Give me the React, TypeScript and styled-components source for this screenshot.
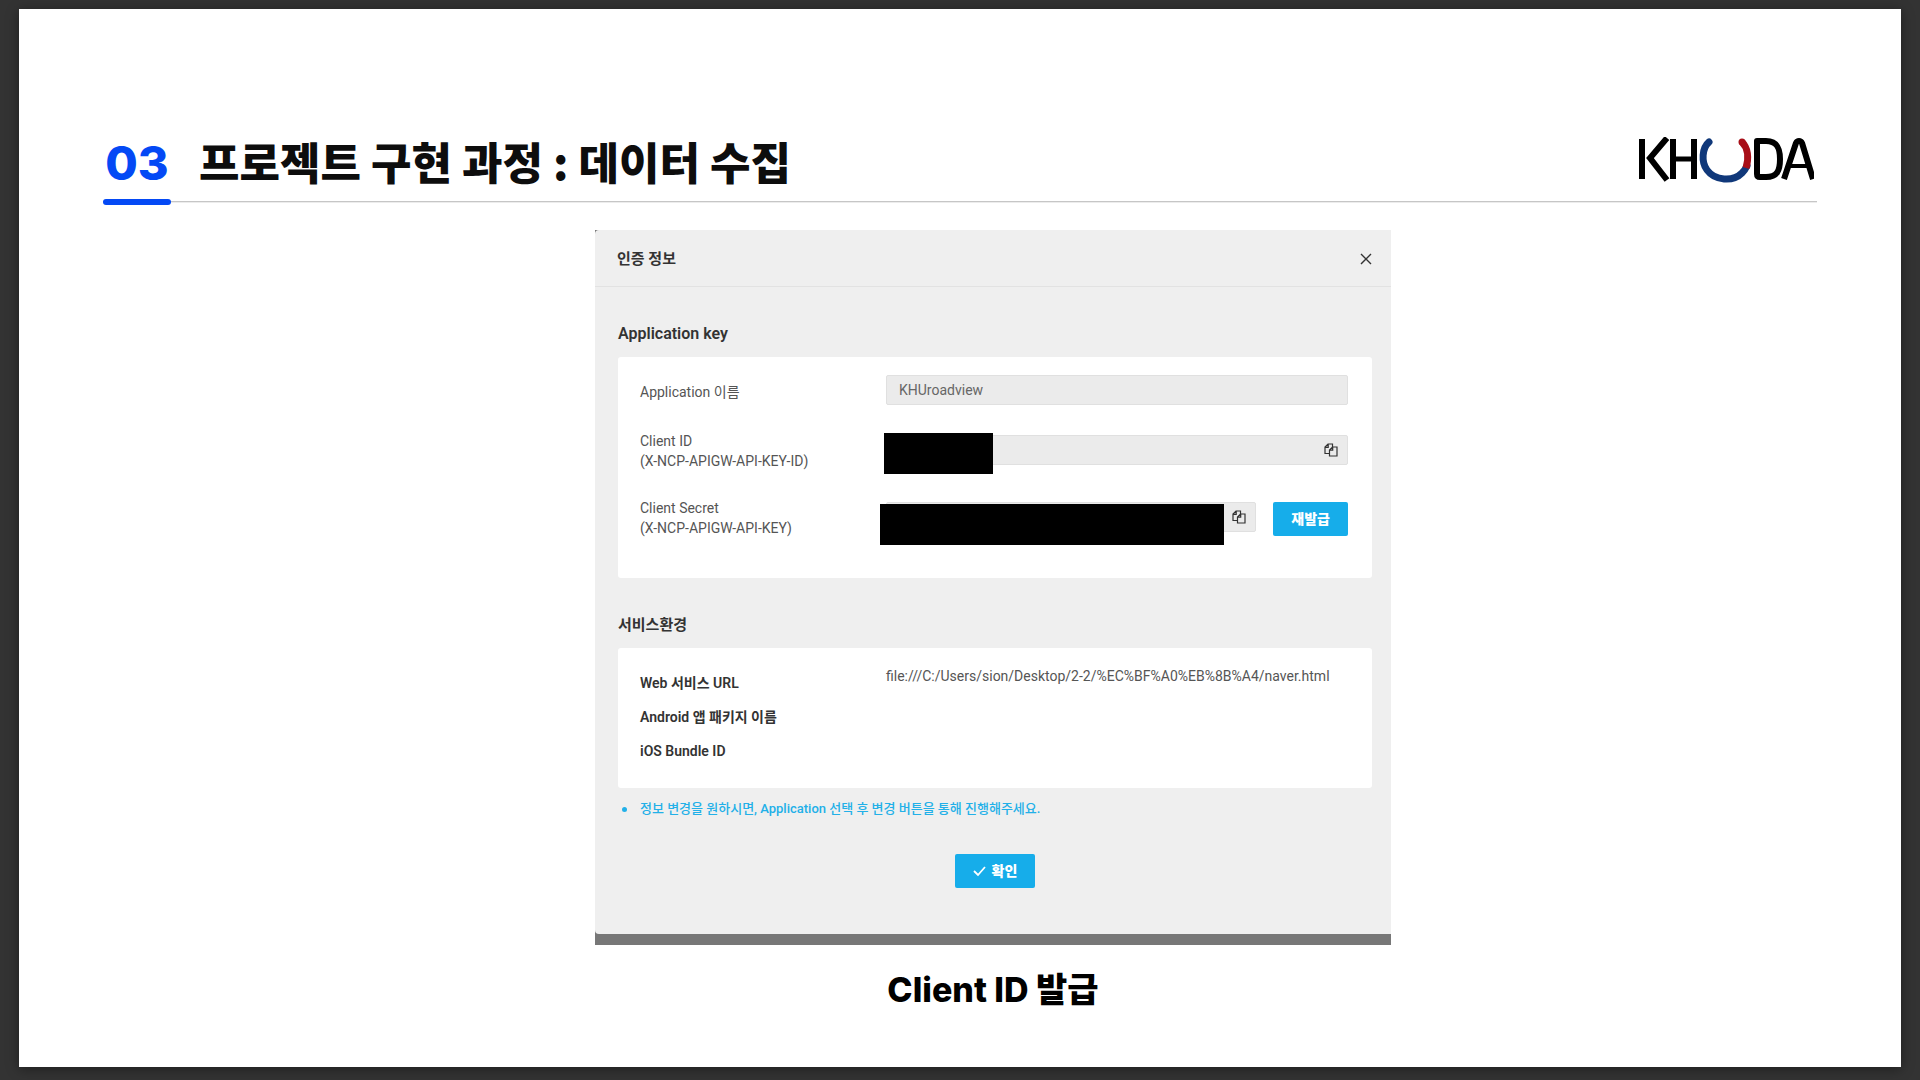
import React from "react";
import styled, { createGlobalStyle } from "styled-components";

const GlobalStyle = createGlobalStyle`
  *, *::before, *::after { box-sizing: border-box; }
  body { margin: 0; background: #333333; }
  h1, h2, h3, p, ul, dl, dd, figure { margin: 0; padding: 0; }
`;

const displayFont = `Inter, "Noto Sans CJK KR", sans-serif`;
const uiFont = `Roboto, "Noto Sans CJK KR", sans-serif`;

const Viewer = styled.div`
  display: flex;
  min-height: 100vh;
  padding: 9px 19px 13px;
`;

const Slide = styled.main`
  flex: 1;
  display: flex;
  flex-direction: column;
  padding: 114px 84px 48px;
  background: #ffffff;
  box-shadow: 0 2px 12px rgba(0, 0, 0, 0.4);
  font-family: ${displayFont};
`;

const SlideHeader = styled.header`
  display: flex;
  align-items: flex-start;
  height: 79px;
  border-bottom: 1px solid #c6c6c6;
  box-shadow: 0 1px 0 #ececec;
`;

const SectionNumber = styled.span`
  position: relative;
  align-self: stretch;
  width: 68px;
  padding-top: 10px;
  color: #0449f5;
  font-size: 47px;
  font-weight: 800;
  line-height: 60px;
  text-align: center;

  &::after {
    content: "";
    position: absolute;
    left: 0;
    right: 0;
    bottom: -4px;
    height: 6px;
    border-radius: 3px;
    background: #0449f5;
  }
`;

const SlideTitle = styled.h1`
  flex: 1;
  padding: 8px 28px 0;
  color: #0d0d0d;
  font-family: "Noto Sans CJK KR", sans-serif;
  font-size: 44px;
  font-weight: 900;
  line-height: 60px;
`;

const Figure = styled.figure`
  display: flex;
  flex-direction: column;
  align-items: center;
  padding: 28px 0 0 66px;
`;

const Capture = styled.div`
  width: 796px;
  max-width: 100%;
  padding-bottom: 11px;
  background: #777777;
`;

const Dialog = styled.section`
  border-radius: 4px 0 0 4px;
  background: #efefef;
  color: #333333;
  font-family: ${uiFont};
  font-size: 14px;
  line-height: 20px;
`;

const DialogHeader = styled.header`
  display: flex;
  align-items: center;
  justify-content: space-between;
  height: 57px;
  padding: 2px 19px 0 22px;
  border-bottom: 1px solid #e2e2e2;
`;

const DialogTitle = styled.h2`
  font-size: 15px;
  font-weight: 700;
  line-height: 24px;
`;

const CloseButton = styled.button`
  display: flex;
  padding: 0;
  border: 0;
  background: none;
  color: #333333;
`;

const DialogBody = styled.div`
  padding: 35px 19px 46px 23px;
`;

const GroupTitle = styled.h3`
  padding-bottom: 11px;
  font-size: 16px;
  font-weight: 600;
  line-height: 24px;
`;

const ServiceTitle = styled(GroupTitle)`
  padding-top: 35px;
  font-size: 15px;
`;

const Card = styled.div`
  padding: 18px 24px 0 22px;
  border-radius: 3px;
  background: #ffffff;
`;

const KeyCard = styled(Card)`
  display: grid;
  grid-template-columns: 246px 1fr;
  grid-template-rows: 60px 67px 76px;
  color: #555555;
`;

const FieldLabel = styled.label<{ $single?: boolean }>`
  padding-top: ${(p) => (p.$single ? "7px" : "0")};
  margin-top: ${(p) => (p.$single ? "0" : "-4px")};
`;

const Field = styled.div`
  display: flex;
  align-items: flex-start;
  gap: 17px;
`;

const InputBox = styled.div`
  position: relative;
  display: flex;
  flex: 1;
  align-items: center;
  height: 30px;
  border: 1px solid #e0e0e0;
  border-radius: 2px;
  background: #ebebeb;
`;

const TextInput = styled.input`
  flex: 1;
  min-width: 0;
  padding: 0 12px;
  border: 0;
  outline: 0;
  background: none;
  color: #666666;
  font: inherit;
`;

const CopyButton = styled.button`
  display: flex;
  margin-right: 9px;
  padding: 0;
  border: 0;
  background: none;
  color: #333333;
`;

/* Black bar that hides a credential printed in the input beneath it. */
const Redaction = styled.span<{ $left: number; $top: number; $width: number }>`
  position: absolute;
  left: ${(p) => p.$left}px;
  top: ${(p) => p.$top}px;
  width: ${(p) => p.$width}px;
  height: 41px;
  background: #000000;
`;

const PrimaryButton = styled.button`
  display: flex;
  align-items: center;
  justify-content: center;
  gap: 6px;
  height: 34px;
  padding: 0 18px;
  border: 0;
  border-radius: 2px;
  background: #16adea;
  color: #ffffff;
  font-family: ${uiFont};
  font-size: 14px;
  font-weight: 900;
  line-height: 20px;
`;

const ServiceCard = styled(Card).attrs({ as: "dl" })`
  display: grid;
  grid-template-columns: 246px 1fr;
  grid-auto-rows: 34px;
  padding-bottom: 20px;
`;

const Term = styled.dt`
  padding-top: 7px;
  font-weight: 600;
`;

const Value = styled.dd`
  color: #555555;
`;

const Notes = styled.ul`
  padding: 11px 0 35px 22px;
  color: #22b0e8;
  font-size: 13px;
  font-weight: 500;
  list-style: none;
`;

const Note = styled.li`
  display: flex;
  align-items: center;

  &::before {
    content: "";
    width: 5px;
    height: 5px;
    margin: 0 13px 0 -18px;
    border-radius: 50%;
    background: currentColor;
  }
`;

const Actions = styled.div`
  display: flex;
  justify-content: center;
`;

const Caption = styled.figcaption`
  padding-top: 18px;
  color: #000000;
  font-size: 34px;
  font-weight: 800;
  line-height: 54px;
`;

const LogoMark = styled.svg`
  margin: 14px 3px 0 0;
`;

const Logo = () => (
  <LogoMark width="178" height="48" viewBox="0 0 178 48" fill="none" role="img" aria-label="KHUDA">
    <g stroke="#000000" strokeWidth="6" strokeLinejoin="round">
      <path d="M6 2V42" />
      <path d="M31 1L14 21L31 43" strokeLinejoin="miter" />
      <path d="M37 2V42M58 2V42" />
      <path d="M37 22H58" strokeWidth="5" />
      <path d="M121 4H130C141 4 144 11 144 22C144 34 141 40 130 40H124Q121 40 121 37Z" />
      <path d="M148 42L160 6Q161 4 163 4Q165 4 166 6L177 42" />
      <path d="M153 29H172" strokeWidth="4" />
    </g>
    <g strokeWidth="7">
      <path d="M73 5C66 11 65 25 71 33C79 44 97 45 106 36Q109 33 111 29" stroke="#10387a" strokeLinecap="round" />
      <path d="M106 5C112 11 113 21 110 31" stroke="#a80f18" />
      <circle cx="106" cy="5" r="3.500" fill="#a80f18" />
    </g>
  </LogoMark>
);

const CopyIcon = () => (
  <svg width="14" height="14" viewBox="0 0 14 14" fill="none" stroke="currentColor" strokeWidth="1.200" aria-hidden="true">
    <path d="M5 10.500H1V4L4 1H8.500V4M4.200 1V4.300H1" />
    <path d="M8.500 4H13V13H5.500V7L8.500 4ZM8.700 4V7.200H5.500" />
  </svg>
);

const CloseIcon = () => (
  <svg width="12" height="12" viewBox="0 0 12 12" stroke="currentColor" strokeWidth="1.400" aria-hidden="true">
    <path d="M1 1L11 11M11 1L1 11" />
  </svg>
);

const CheckIcon = () => (
  <svg width="13" height="12" viewBox="0 0 13 12" fill="none" stroke="currentColor" strokeWidth="1.800" aria-hidden="true">
    <path d="M1 6L5 10L12 2" />
  </svg>
);

export default function App() {
  return (
    <>
      <GlobalStyle />
      <Viewer>
        <Slide>
          <SlideHeader>
            <SectionNumber>03</SectionNumber>
            <SlideTitle>프로젝트 구현 과정 : 데이터 수집</SlideTitle>
            <Logo />
          </SlideHeader>
          <Figure>
            <Capture>
              <Dialog aria-labelledby="dialog-title">
                <DialogHeader>
                  <DialogTitle id="dialog-title">인증 정보</DialogTitle>
                  <CloseButton type="button" aria-label="닫기">
                    <CloseIcon />
                  </CloseButton>
                </DialogHeader>
                <DialogBody>
                  <GroupTitle>Application key</GroupTitle>
                  <KeyCard>
                    <FieldLabel htmlFor="app-name" $single>
                      Application 이름
                    </FieldLabel>
                    <Field>
                      <InputBox>
                        <TextInput id="app-name" readOnly value="KHUroadview" />
                      </InputBox>
                    </Field>
                    <FieldLabel htmlFor="client-id">
                      Client ID
                      <br />
                      (X-NCP-APIGW-API-KEY-ID)
                    </FieldLabel>
                    <Field>
                      <InputBox>
                        <TextInput id="client-id" readOnly value="" />
                        <CopyButton type="button" aria-label="Client ID 복사">
                          <CopyIcon />
                        </CopyButton>
                        <Redaction $left={-3} $top={-3} $width={109} />
                      </InputBox>
                    </Field>
                    <FieldLabel htmlFor="client-secret">
                      Client Secret
                      <br />
                      (X-NCP-APIGW-API-KEY)
                    </FieldLabel>
                    <Field>
                      <InputBox>
                        <TextInput id="client-secret" readOnly value="" />
                        <CopyButton type="button" aria-label="Client Secret 복사">
                          <CopyIcon />
                        </CopyButton>
                        <Redaction $left={-7} $top={1} $width={344} />
                      </InputBox>
                      <PrimaryButton type="button">재발급</PrimaryButton>
                    </Field>
                  </KeyCard>
                  <ServiceTitle>서비스환경</ServiceTitle>
                  <ServiceCard>
                    <Term>Web 서비스 URL</Term>
                    <Value>file:///C:/Users/sion/Desktop/2-2/%EC%BF%A0%EB%8B%A4/naver.html</Value>
                    <Term>Android 앱 패키지 이름</Term>
                    <Value />
                    <Term>iOS Bundle ID</Term>
                    <Value />
                  </ServiceCard>
                  <Notes>
                    <Note>정보 변경을 원하시면, Application 선택 후 변경 버튼을 통해 진행해주세요.</Note>
                  </Notes>
                  <Actions>
                    <PrimaryButton type="button">
                      <CheckIcon />
                      확인
                    </PrimaryButton>
                  </Actions>
                </DialogBody>
              </Dialog>
            </Capture>
            <Caption>Client ID 발급</Caption>
          </Figure>
        </Slide>
      </Viewer>
    </>
  );
}
